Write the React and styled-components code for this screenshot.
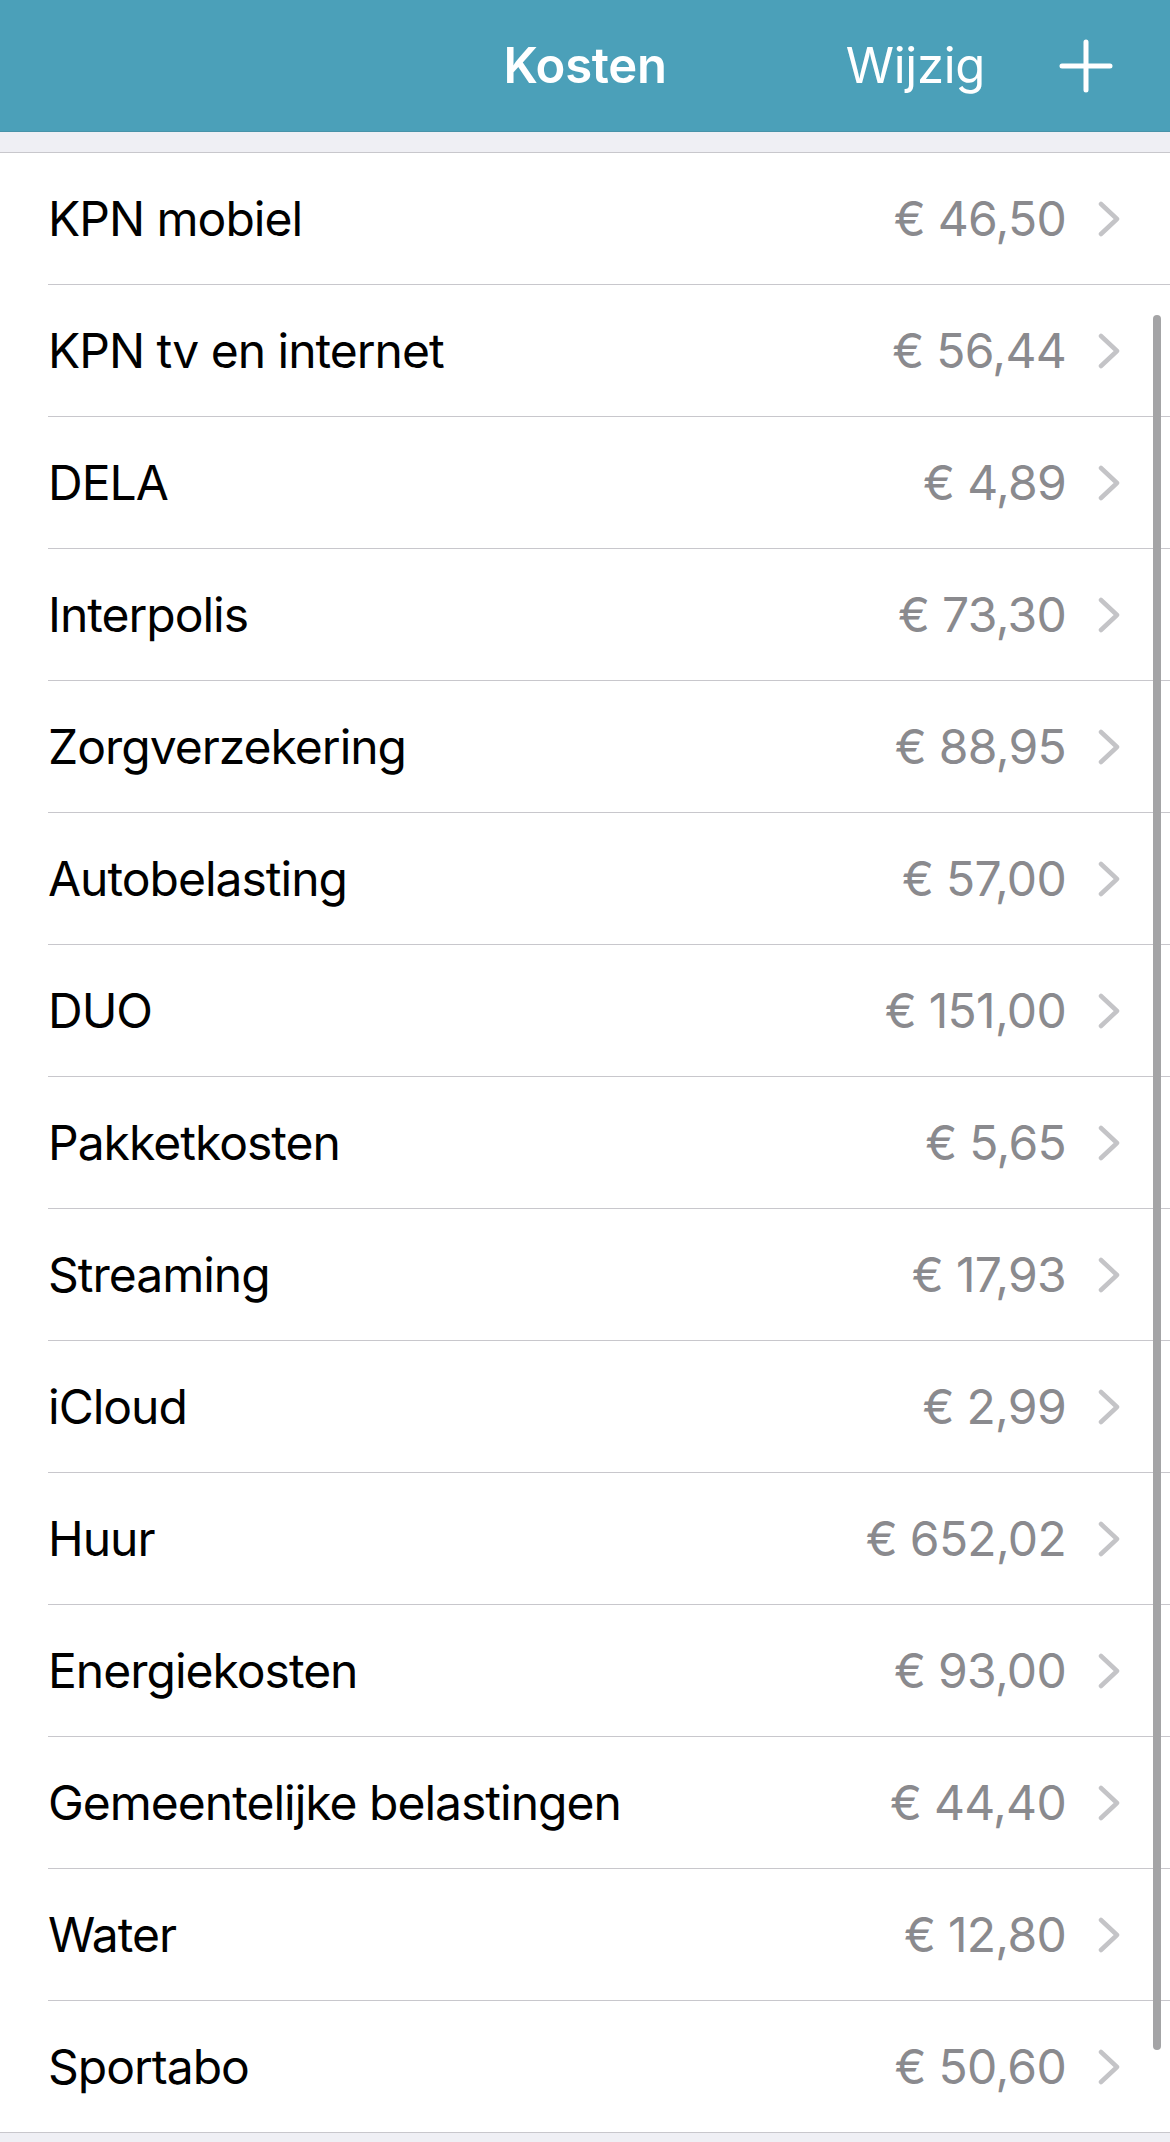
import React from 'react';
import styled, { createGlobalStyle } from 'styled-components';

// -- Data
const costs = [
  { label: 'KPN mobiel', amount: '€ 46,50' },
  { label: 'KPN tv en internet', amount: '€ 56,44' },
  { label: 'DELA', amount: '€ 4,89' },
  { label: 'Interpolis', amount: '€ 73,30' },
  { label: 'Zorgverzekering', amount: '€ 88,95' },
  { label: 'Autobelasting', amount: '€ 57,00' },
  { label: 'DUO', amount: '€ 151,00' },
  { label: 'Pakketkosten', amount: '€ 5,65' },
  { label: 'Streaming', amount: '€ 17,93' },
  { label: 'iCloud', amount: '€ 2,99' },
  { label: 'Huur', amount: '€ 652,02' },
  { label: 'Energiekosten', amount: '€ 93,00' },
  { label: 'Gemeentelijke belastingen', amount: '€ 44,40' },
  { label: 'Water', amount: '€ 12,80' },
  { label: 'Sportabo', amount: '€ 50,60' },
];

// -- Icons
const PlusIcon = () => (
  <svg width="54" height="54" viewBox="0 0 54 54">
    <path
      d="M27 3v48M3 27h48"
      stroke="#fff"
      strokeWidth="5"
      strokeLinecap="round"
      fill="none"
    />
  </svg>
);

const Chevron = () => (
  <svg width="22" height="36" viewBox="0 0 22 36">
    <path
      d="M3 3l16 15L3 33"
      stroke="#C4C4C7"
      strokeWidth="4.5"
      strokeLinecap="round"
      strokeLinejoin="round"
      fill="none"
    />
  </svg>
);

// -- Component
export default function App() {
  return (
    <>
      <GlobalStyle />
      <Page>
        <NavBar>
          <span />
          <Title>Kosten</Title>
          <NavActions>
            <NavButton>Wijzig</NavButton>
            <PlusIcon />
          </NavActions>
        </NavBar>
        <List>
          {costs.map((item, i) => (
            <Row key={item.label}>
              <RowInner last={i === costs.length - 1}>
                <Label>{item.label}</Label>
                <Amount>{item.amount}</Amount>
                <Chevron />
              </RowInner>
            </Row>
          ))}
        </List>
        <ScrollIndicator />
      </Page>
    </>
  );
}

// -- Styles
const GlobalStyle = createGlobalStyle`
  body {
    margin: 0;
    background: #efeff4;
    font-family: Inter, "Noto Sans", sans-serif;
  }
`;

const Page = styled.div`
  position: relative;
  width: 1170px;
  height: 2142px;
  overflow: hidden;
  background: #efeff4;
`;

const NavBar = styled.header`
  display: grid;
  grid-template-columns: 1fr auto 1fr;
  align-items: center;
  height: 131px;
  background: #4ba0b9;
  border-bottom: 1px solid #4893a9;
  color: #fff;
`;

const Title = styled.h1`
  margin: 0;
  font-size: 49px;
  font-weight: 600;
  letter-spacing: -0.3px;
`;

const NavActions = styled.div`
  display: flex;
  align-items: center;
  justify-content: flex-end;
  gap: 74px;
  padding-right: 57px;
`;

const NavButton = styled.span`
  font-size: 49px;
  font-weight: 400;
  letter-spacing: -0.3px;
`;

const List = styled.ul`
  margin: 20px 0 0;
  padding: 0;
  list-style: none;
  background: #fff;
  border-top: 1px solid #c8c7cc;
  border-bottom: 1px solid #c8c7cc;
`;

const Row = styled.li`
  padding-left: 48px;
`;

const RowInner = styled.div`
  display: flex;
  align-items: center;
  height: 131px;
  padding-right: 50px;
  border-bottom: ${({ last }) => (last ? 'none' : '1px solid #c8c7cc')};
`;

const Label = styled.span`
  flex: 1;
  font-size: 48px;
  color: #000;
  letter-spacing: -1px;
`;

const Amount = styled.span`
  margin-right: 32px;
  font-size: 48px;
  color: #8a8a8e;
  letter-spacing: -0.7px;
`;

const ScrollIndicator = styled.div`
  position: absolute;
  top: 315px;
  left: 1153px;
  width: 8px;
  height: 1735px;
  border-radius: 4px;
  background: #a4a4a6;
`;
